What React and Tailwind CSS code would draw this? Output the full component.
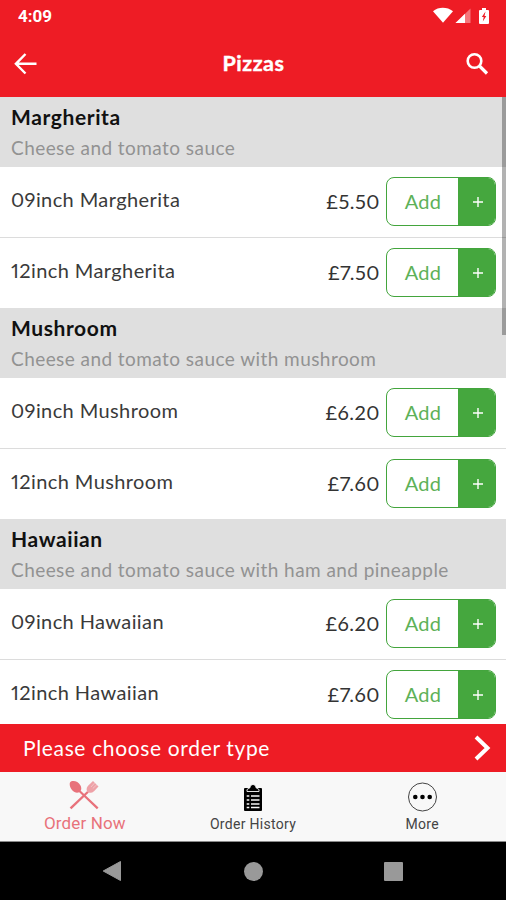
const menu = [
  {
    name: 'Margherita',
    description: 'Cheese and tomato sauce',
    items: [
      { label: '09inch Margherita', price: '£5.50' },
      { label: '12inch Margherita', price: '£7.50' },
    ],
  },
  {
    name: 'Mushroom',
    description: 'Cheese and tomato sauce with mushroom',
    items: [
      { label: '09inch Mushroom', price: '£6.20' },
      { label: '12inch Mushroom', price: '£7.60' },
    ],
  },
  {
    name: 'Hawaiian',
    description: 'Cheese and tomato sauce with ham and pineapple',
    items: [
      { label: '09inch Hawaiian', price: '£6.20' },
      { label: '12inch Hawaiian', price: '£7.60' },
    ],
  },
];

function StatusBar() {
  return (
    <div className="h-8 flex items-center justify-between pl-[18px] pr-[15px] text-white">
      <span className="font-['Roboto',sans-serif] font-bold text-[17px] leading-none">4:09</span>
      <svg width="58" height="18" viewBox="0 0 58 18" fill="currentColor">
        <path d="M0 4.2C5.500-.3 14-.3 20 4.200L10 15.800Z" />
        <path d="M22.500 16 37.500 1.500V16Z" opacity=".4" />
        <path d="M22.500 16 32 6.700V16Z" />
        <path d="M46 4a1 1 0 0 1 1-1h2V1h4v2h2a1 1 0 0 1 1 1v12a1 1 0 0 1-1 1h-8a1 1 0 0 1-1-1Z" />
        <path d="M52.500 4.500 48.800 10h1.900l-.9 4.500L53.300 9h-1.800Z" fill="#ee1c25" />
      </svg>
    </div>
  );
}

function Header() {
  return (
    <div className="h-[65px] flex items-center justify-between pl-[14px] pr-[17px] pb-[1px] text-white">
      <svg width="24" height="22" viewBox="0 0 24 22" fill="none" stroke="currentColor" strokeWidth="2.400">
        <path d="M11.500 1 1.900 10.800l9.600 9.700M1.900 10.800H22.500" />
      </svg>
      <h1 className="pl-[4px] pb-px font-bold text-[21.500px] leading-none tracking-[0.5px] [-webkit-text-stroke:0.4px_white]">Pizzas</h1>
      <svg width="24" height="24" viewBox="0 0 24 24" fill="none" stroke="currentColor">
        <circle cx="9.500" cy="9" r="6.800" strokeWidth="2.600" />
        <path d="m14.500 14 7.500 7.500" strokeWidth="3.200" />
      </svg>
    </div>
  );
}

function AddButton() {
  return (
    <button className="w-[110px] h-[49px] flex rounded-[8px] border border-[#43a53d] overflow-hidden bg-white">
      <span className="flex-1 h-full flex items-center justify-center pl-px text-[20px] tracking-[0.3px] text-[#5db158]">Add</span>
      <span className="w-[37px] h-full flex items-center justify-center pl-[3px] pt-px bg-[#45a73e] text-white">
        <svg width="12" height="12" viewBox="0 0 12 12" stroke="currentColor" strokeWidth="1.400">
          <path d="M6 1v10M1 6h10" />
        </svg>
      </span>
    </button>
  );
}

function Section({ section }) {
  return (
    <section>
      <div className="h-[70px] bg-[#dfdfdf] pl-[11px] pt-[6px]">
        <h2 className="font-bold text-[21px] leading-[28px] tracking-[0.6px] text-[#111]">{section.name}</h2>
        <p className="text-[19px] leading-[33px] tracking-[0.440px] text-[#929292]">{section.description}</p>
      </div>
      <div className="divide-y divide-[#dcdcdc] bg-white">
        {section.items.map((item) => (
          <div key={item.label} className="h-[70px] box-content flex items-center pl-[11px] pr-[10px] proportional-nums">
            <span className="flex-1 pb-[6px] text-[20px] tracking-[0.4px] text-[#3a3a3a]">{item.label}</span>
            <span className="mr-[6px] pb-[2px] text-[20px] tracking-[0.5px] text-[#333]">{item.price}</span>
            <div className="pb-[2px]">
              <AddButton />
            </div>
          </div>
        ))}
      </div>
    </section>
  );
}

function TabBar() {
  return (
    <nav className="h-[70px] grid grid-cols-3 bg-[#f8f8f8] border-b border-[#8a8a8a] font-['Roboto',sans-serif]">
      <div className="flex flex-col items-center pt-[8px] text-[#e8727b]">
        <svg width="30" height="30" viewBox="0 0 30 30" fill="currentColor">
          <path d="M1 2.500C3-.2 9 .8 11.500 5.500c1.200 2.400.8 4.200.2 5.200L29.500 27.500l-1.600 1.700L10.200 12.300c-2.200.9-5 .4-7-2C1 7.700.2 4.500 1 2.500Z" />
          <path d="M.7 27.500 18 11.200l1.800 1.200L2.400 29.200Z" />
          <path d="M18 11.200c-.8-2.200-.2-4.200 1.300-5.700L24 1l5.500 5.500-4.500 4.700c-1.700 1.500-3.400 1.900-5.200 1.200Z" opacity=".65" />
          <path d="m26 2.500-4 4.500M28 4.500l-4.200 4" stroke="#f8f8f8" strokeWidth=".8" opacity=".5" />
        </svg>
        <span className="mt-[2px] pl-px text-[17px] leading-[22px] tracking-[0.150px]">Order Now</span>
      </div>
      <div className="flex flex-col items-center pt-[12px] text-black">
        <svg width="20" height="28" viewBox="0 0 20 28">
          <path d="M2 4h16a1 1 0 0 1 1 1v21a1 1 0 0 1-1 1H2a1 1 0 0 1-1-1V5a1 1 0 0 1 1-1Z" />
          <path d="M4 7.500V5.500l3-1.800C7.300 1.500 8.500.5 10 .5s2.700 1 3 3.200l3 1.800v2Z" stroke="#f8f8f8" strokeWidth=".9" />
          <path d="M3.700 12h2.600M3.700 16h2.600M3.700 20h2.600M3.700 23.500h2.600M8 12h8.500M8 16h8.500M8 20h8.500M8 23.500h8.500" stroke="#f8f8f8" strokeWidth="1.400" />
        </svg>
        <span className="mt-[3px] text-[14px] leading-[18px] tracking-[0.300px] text-[#444]">Order History</span>
      </div>
      <div className="flex flex-col items-center pt-[10px] text-black">
        <svg width="30" height="30" viewBox="0 0 30 30">
          <circle cx="15.500" cy="15" r="14" fill="none" stroke="#444" />
          <circle cx="8.300" cy="15" r="2.300" />
          <circle cx="15.500" cy="15" r="2.300" />
          <circle cx="22.700" cy="15" r="2.300" />
        </svg>
        <span className="mt-[3px] pl-px text-[14px] leading-[18px] tracking-[0.300px] text-[#444]">More</span>
      </div>
    </nav>
  );
}

function SystemNav() {
  return (
    <div className="h-[58px] flex items-center justify-between pl-[102px] pr-[103px] bg-black text-[#999]">
      <svg width="20" height="22" viewBox="0 0 20 22" fill="currentColor">
        <path d="M1.200 11 18.500 1.500v19Z" stroke="currentColor" strokeLinejoin="round" />
      </svg>
      <span className="size-[19px] rounded-full bg-[#999]" />
      <span className="size-[19px] rounded-[1px] bg-[#999]" />
    </div>
  );
}

export default function App() {
  return (
    <div className="w-[506px] h-[900px] flex flex-col overflow-hidden bg-white font-['Lato',sans-serif]">
      <header className="h-[97px] shrink-0 bg-[#ee1c25]">
        <StatusBar />
        <Header />
      </header>
      <main className="relative flex-1 min-h-0 overflow-hidden">
        {menu.map((section) => (
          <Section key={section.name} section={section} />
        ))}
        <div className="absolute top-0 right-0 w-1 h-[238px] bg-black/30" />
      </main>
      <div className="h-[48px] shrink-0 flex items-center justify-between pl-[23px] pr-[15px] bg-[#ee1c25] text-white">
        <span className="text-[21px] tracking-[0.650px]">Please choose order type</span>
        <svg width="18" height="26" viewBox="0 0 18 26" fill="none" stroke="currentColor" strokeWidth="4">
          <path d="M3 2 14.500 13 3 24" />
        </svg>
      </div>
      <TabBar />
      <SystemNav />
    </div>
  );
}
